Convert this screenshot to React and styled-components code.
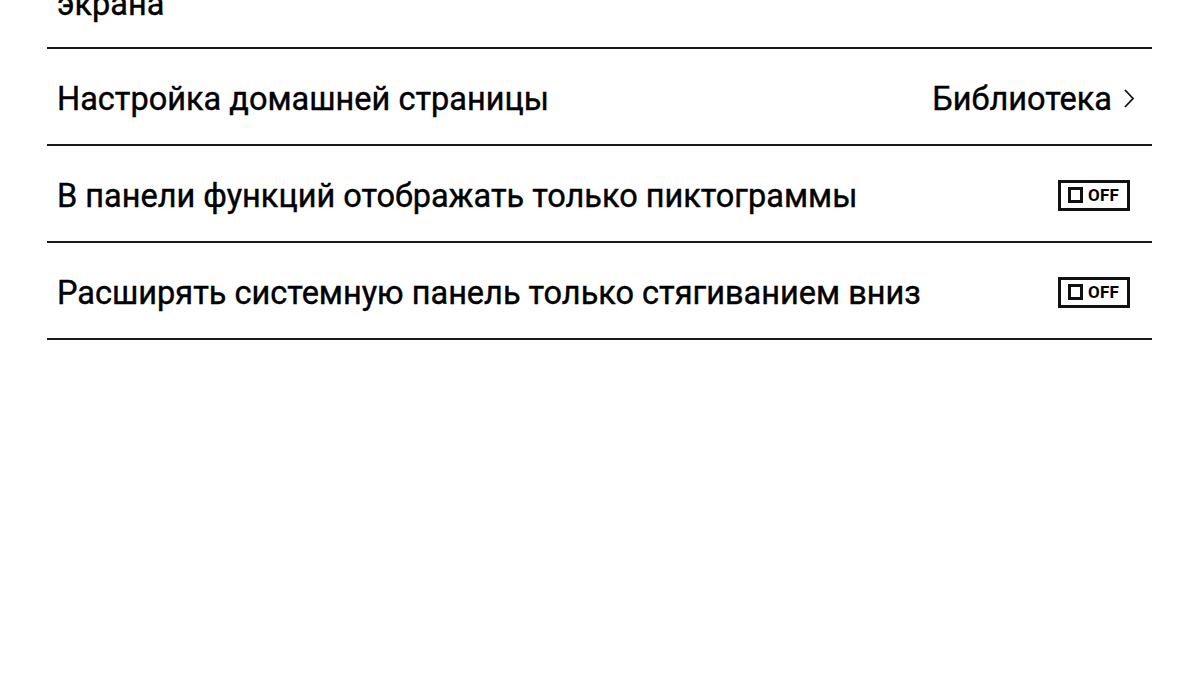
import React from "react";
import styled, { createGlobalStyle } from "styled-components";

const Global = createGlobalStyle`
  html, body { margin: 0; padding: 0; background: #fff; }
  body { font-family: Roboto, "Noto Sans", sans-serif; color: #000; }
`;

const Page = styled.div`
  width: 1200px;
  height: 675px;
  overflow: hidden;
  background: #fff;
  padding: 0 48px 0 47px;
  box-sizing: border-box;
`;

const List = styled.div`
  display: flex;
  flex-direction: column;
`;

const CutRow = styled.div`
  height: 47px;
  border-bottom: 2px solid #1a1a1a;
  padding-left: 10px;
`;

const textStyle = `
  font-size: 32.5px;
  font-weight: 400;
  line-height: 38px;
  -webkit-text-stroke: 0.4px #000;
`;

const CutText = styled.div`
  ${textStyle}
  margin-top: -15px;
`;

const Row = styled.div`
  display: flex;
  align-items: center;
  justify-content: space-between;
  border-bottom: 2px solid #1a1a1a;
  padding: 4px ${(p) => (p.$toggle ? "22px" : "17px")} 0 10px;
  box-sizing: border-box;
  height: 97px;
`;

const Label = styled.span`
  ${textStyle}
`;

const Value = styled.span`
  display: flex;
  align-items: center;
  gap: 11px;
  ${textStyle}
`;

const Chevron = styled.svg`
  width: 12px;
  height: 21px;
`;

const Toggle = styled.span`
  display: inline-flex;
  align-items: center;
  gap: 5px;
  box-sizing: border-box;
  width: 72px;
  height: 31px;
  border: 3px solid #111;
  padding: 0 0 0 7px;
  margin-top: -1px;
`;

const Knob = styled.span`
  display: block;
  flex: 0 0 15px;
  box-sizing: border-box;
  width: 15px;
  height: 16px;
  border: 3px solid #111;
`;

const ToggleText = styled.span`
  font-size: 17px;
  font-weight: 700;
  line-height: 1;
  letter-spacing: 0.2px;
`;

function Off() {
  return (
    <Toggle>
      <Knob />
      <ToggleText>OFF</ToggleText>
    </Toggle>
  );
}

export default function App() {
  return (
    <>
      <Global />
      <Page>
        <List>
          <CutRow>
            <CutText>экрана</CutText>
          </CutRow>
          <Row>
            <Label>Настройка домашней страницы</Label>
            <Value>
              Библиотека
              <Chevron viewBox="0 0 12 21">
                <path d="M2 2 L10 10.5 L2 19" fill="none" stroke="#111" strokeWidth="1.8" />
              </Chevron>
            </Value>
          </Row>
          <Row $toggle>
            <Label>В панели функций отображать только пиктограммы</Label>
            <Off />
          </Row>
          <Row $toggle>
            <Label>Расширять системную панель только стягиванием вниз</Label>
            <Off />
          </Row>
        </List>
      </Page>
    </>
  );
}
